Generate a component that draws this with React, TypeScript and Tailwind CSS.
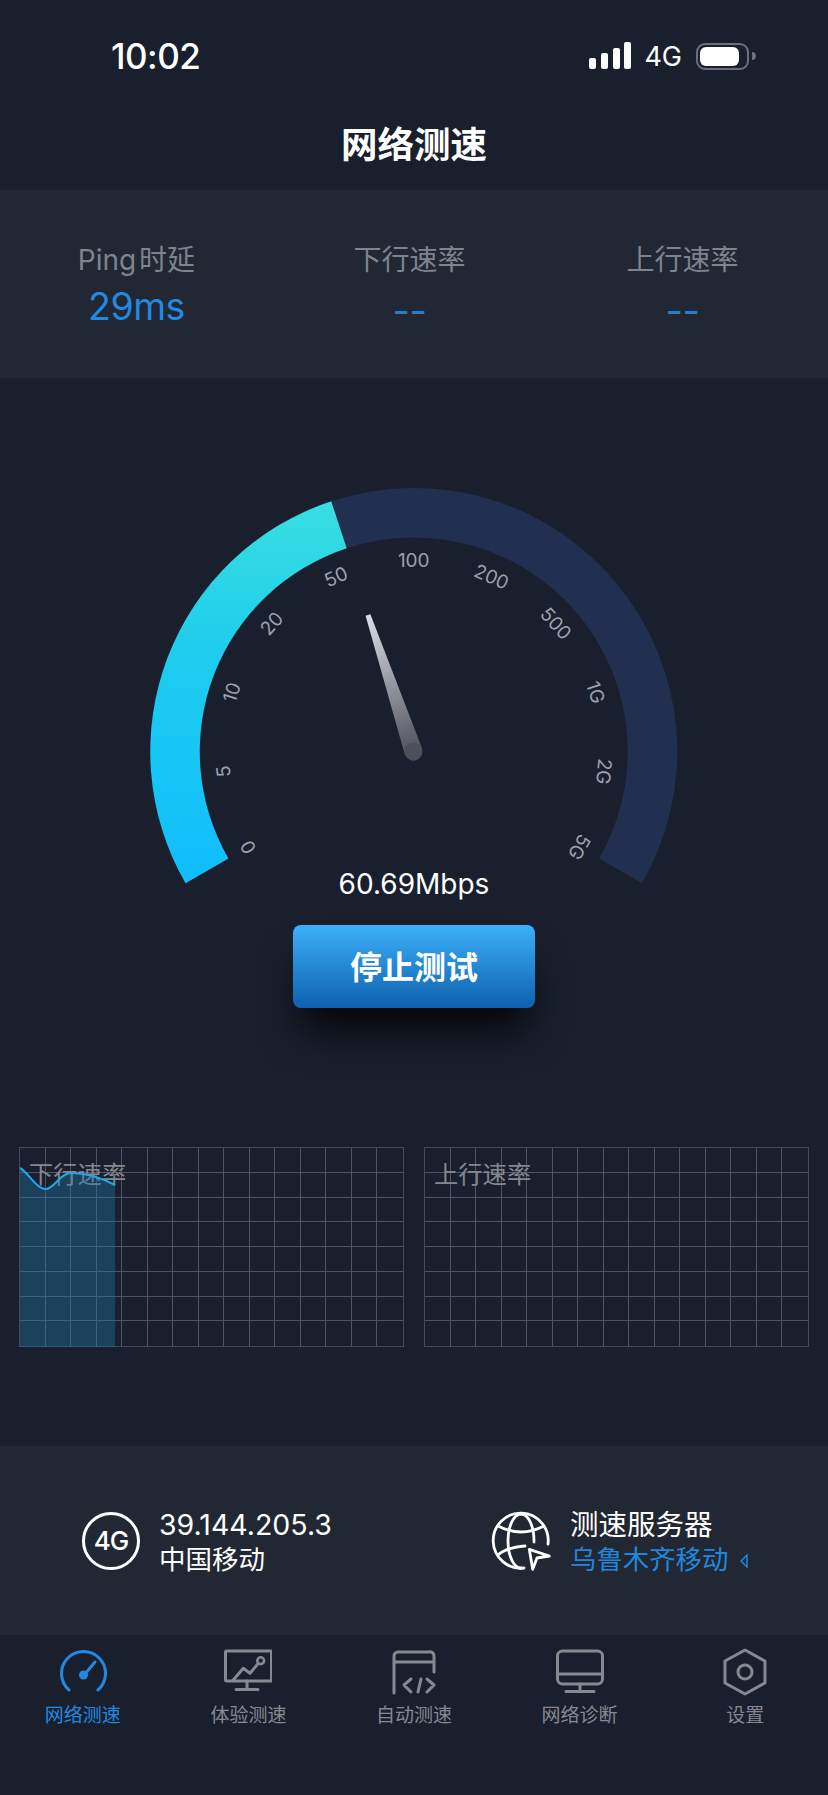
const FONT = "font-['Inter','Noto_Sans_CJK_SC',sans-serif]";

const CX = 414.75;
const CY = 751.5;

const polar = (r: number, deg: number) => {
  const a = (deg * Math.PI) / 180;
  return [CX + r * Math.cos(a), CY - r * Math.sin(a)];
};

const band = (from: number, to: number) => {
  const [ax, ay] = polar(263.5, from);
  const [bx, by] = polar(263.5, to);
  const [cx, cy] = polar(214, to);
  const [dx, dy] = polar(214, from);
  const large = from - to > 180 ? 1 : 0;
  return `M${ax} ${ay} A263.5 263.5 0 ${large} 1 ${bx} ${by} L${cx} ${cy} A214 214 0 ${large} 0 ${dx} ${dy} Z`;
};

const ticks = ['0', '5', '10', '20', '50', '100', '200', '500', '1G', '2G', '5G'];

const Gauge = () => (
  <svg className="mx-auto block h-[400px] w-[530px]" viewBox="150 487 530 400">
    <defs>
      <linearGradient id="speed" gradientUnits="userSpaceOnUse" x1="0" y1="883" x2="0" y2="500">
        <stop offset="0" stopColor="#10bdfd" />
        <stop offset="0.6" stopColor="#1ecdee" />
        <stop offset="1" stopColor="#38dedf" />
      </linearGradient>
      <linearGradient id="needle" gradientUnits="userSpaceOnUse" x1="369" y1="615" x2="414" y2="755">
        <stop offset="0" stopColor="#dcdfe7" />
        <stop offset="1" stopColor="#4d4f59" />
      </linearGradient>
    </defs>
    <path d={band(108.25, -30)} fill="#212f50" />
    <path d={band(210, 108.25)} fill="url(#speed)" />
    {ticks.map((t, i) => {
      const deg = 210 - i * 24;
      const [x, y] = polar(191, deg);
      return (
        <text
          key={t}
          x={x}
          y={y}
          fill="#9da1ab"
          fontSize="19"
          textAnchor="middle"
          dominantBaseline="central"
          transform={`rotate(${90 - deg} ${x} ${y})`}
        >
          {t}
        </text>
      );
    })}
    <path d="M371.4 614.2 L366.6 615.8 L405.8 754.6 L423.2 748.8 Z" fill="url(#needle)" />
    <circle cx="414.5" cy="751.7" r="9" fill="#4d4f59" />
  </svg>
);

const Stat = ({ label, value }: { label: string; value: string }) => (
  <div className="flex flex-col items-center">
    <div className="text-[28px] leading-[36px] text-[#7f838d] [word-spacing:-5px]">{label}</div>
    {value === '--' ? (
      <div className="mt-[8px] text-[38px] leading-[48px] tracking-[-0.5px] text-[#1f80d2]">{value}</div>
    ) : (
      <div className="mt-[5px] text-[37.5px] leading-[48px] tracking-[-0.5px] text-[#2189e0]">{value}</div>
    )}
  </div>
);

const Chart = ({ label, data }: { label: string; data?: boolean }) => (
  <div className="relative h-[200px] w-[385px] border border-[#444a59]">
    <div className="grid h-full w-full grid-cols-15 grid-rows-8">
      {Array.from({ length: 120 }).map((_, i) => (
        <div
          key={i}
          className={`border-[#4f5564] ${i % 15 === 14 ? '' : 'border-r'} ${i >= 105 ? '' : 'border-b'}`}
        />
      ))}
    </div>
    <div className="absolute left-[9px] top-[10px] text-[24.3px] leading-[32px] text-[#84878f]">{label}</div>
    {data && (
      <svg className="absolute left-0 top-0" width="100" height="199" viewBox="0 0 100 199">
        <path d="M0 20 C8 24 16 41 26 41 C34 41 40 25 51 25 C62 25 78 28 95 37 L95 199 L0 199 Z" fill="#2078aa" fillOpacity="0.38" />
        <path d="M0 20 C8 24 16 41 26 41 C34 41 40 25 51 25 C62 25 78 28 95 37" fill="none" stroke="#1ea9e8" strokeWidth="2" />
      </svg>
    )}
  </div>
);

const GlobeIcon = () => (
  <svg width="60" height="60" viewBox="0 0 60 60" fill="none" stroke="#fff" strokeWidth="2.8" strokeLinejoin="round" strokeLinecap="round">
    <path d="M57 33 A27.5 27.5 0 1 0 33 57" />
    <path d="M30 3 A13 27 0 0 0 30 57" />
    <path d="M30 3 A13 27 0 0 1 43 31" />
    <path d="M7 15 Q30 27 53 15" />
    <path d="M7 44 Q14 37 34 35" />
    <path d="M38.3 38.3 L58.3 45 L46 47 L41.7 58.3 Z" />
  </svg>
);

const tabs = [
  {
    label: '网络测速',
    active: true,
    icon: (
      <>
        <path d="M10 42 A22 22 0 1 1 39 42" strokeWidth="3" />
        <path d="M36 14 L26 26" strokeWidth="3" />
        <circle cx="24.5" cy="27" r="4.5" fill="currentColor" stroke="none" />
      </>
    ),
  },
  {
    label: '体验测速',
    active: false,
    icon: (
      <>
        <rect x="1.5" y="3" width="46" height="30" rx="1" strokeWidth="3" />
        <path d="M9.3 32 L19.3 20.3 L26 25.3 L34.3 15.3" strokeWidth="3" />
        <circle cx="36.7" cy="12.7" r="3.4" strokeWidth="2.6" />
        <path d="M23 33 V41 M12 41.5 H34" strokeWidth="3" />
      </>
    ),
  },
  {
    label: '自动测速',
    active: false,
    icon: (
      <>
        <path d="M4 45 V8 A4 4 0 0 1 8 4 H39 A4 4 0 0 1 44 8 V24 M4 14 H44" strokeWidth="3" />
        <path d="M21 31 L14 37 L21 44 M31 31 L28 44 M37 31 L44 37 L37 44" strokeWidth="3" />
      </>
    ),
  },
  {
    label: '网络诊断',
    active: false,
    icon: (
      <>
        <rect x="1.5" y="3" width="45" height="33" rx="5" strokeWidth="3" />
        <path d="M2 26 H46 M24 36 V43 M10 43.5 H38" strokeWidth="3" />
      </>
    ),
  },
  {
    label: '设置',
    active: false,
    icon: (
      <>
        <path d="M24 2 L44 13 V35 L24 46 L4 35 V13 Z" strokeWidth="3" />
        <circle cx="24" cy="24" r="7" strokeWidth="3" />
      </>
    ),
  },
];

const App = () => {
  return (
    <div className={`h-[1795px] w-[828px] overflow-hidden bg-[#191f2d] text-white ${FONT}`}>
      <div className="flex h-[112px] items-center justify-between pl-[111px] pr-[72px]">
        <div className="text-[35px] font-medium tracking-[-0.5px]">10:02</div>
        <div className="flex items-center">
          <svg width="42" height="28" viewBox="0 0 42 28" fill="#fff">
            <rect x="0" y="16" width="7" height="11" rx="2" />
            <rect x="12" y="11" width="7" height="16" rx="2" />
            <rect x="24" y="6" width="7" height="21" rx="2" />
            <rect x="35" y="0" width="7" height="27" rx="2" />
          </svg>
          <div className="ml-[13px] text-[27px] leading-none">4G</div>
          <div className="ml-[14px] flex h-[27px] w-[53px] items-center rounded-[9px] border-2 border-[#6c6f7b] pl-[2px]">
            <div className="h-[19px] w-[39px] rounded-[6px] bg-white" />
          </div>
          <div className="ml-[3px] h-[8px] w-[4px] rounded-r-full bg-[#6c6f7b]" />
        </div>
      </div>
      <div className="flex h-[78px] items-center justify-center pb-[12px] text-[36.5px] font-bold">网络测速</div>

      <div className="grid h-[188px] grid-cols-[273px_273px_273px] bg-[#212733] pt-[52px]">
        <Stat label="Ping 时延" value="29ms" />
        <Stat label="下行速率" value="--" />
        <Stat label="上行速率" value="--" />
      </div>

      <div className="pt-[109px]">
        <Gauge />
        <div className="-mt-[23px] text-center text-[28px] leading-[40px]">60.69Mbps</div>
        <div className="mt-[21px] flex justify-center">
          <div className="flex h-[83px] w-[242px] items-center justify-center rounded-[8px] bg-linear-to-b from-[#3db0fb] to-[#0e61ad] pt-[3px] text-[32px] font-bold shadow-[0_30px_36px_-8px_rgba(0,0,0,0.8)]">
            停止测试
          </div>
        </div>
      </div>

      <div className="mt-[139px] flex gap-[20px] pl-[19px]">
        <Chart label="下行速率" data />
        <Chart label="上行速率" />
      </div>

      <div className="mt-[99px] flex h-[189px] items-center bg-[#212733]">
        <div className="flex w-[491px] items-center pl-[82px]">
          <div className="flex h-[58px] w-[58px] items-center justify-center rounded-full border-[3px] border-white text-[26px] font-medium tracking-[-1px]">
            4G
          </div>
          <div className="ml-[19px] pt-[1px]">
            <div className="text-[28.5px] leading-[35px]">39.144.205.3</div>
            <div className="text-[26.5px] leading-[34px]">中国移动</div>
          </div>
        </div>
        <GlobeIcon />
        <div className="ml-[19px] pt-[1px]">
          <div className="text-[28.5px] leading-[35px]">测速服务器</div>
          <div className="flex items-center text-[26.4px] leading-[34px] text-[#2187dc]">
            乌鲁木齐移动
            <svg className="ml-[12px] mt-[4px]" width="8" height="14" viewBox="0 0 8 14" fill="none" stroke="#2187dc" strokeWidth="1.5">
              <path d="M7 1 L1 7 L7 13 Z" />
            </svg>
          </div>
        </div>
      </div>

      <div className="grid grid-cols-5 pt-[13px]">
        {tabs.map((tab) => (
          <div key={tab.label} className={`flex flex-col items-center ${tab.active ? 'text-[#2189e0]' : 'text-[#868990]'}`}>
            <svg width="48" height="48" viewBox="0 0 48 48" fill="none" stroke="currentColor" strokeLinecap="round" strokeLinejoin="round">
              {tab.icon}
            </svg>
            <div className="mt-[8px] text-[19px] leading-[24px]">{tab.label}</div>
          </div>
        ))}
      </div>
    </div>
  );
};

export default App;
